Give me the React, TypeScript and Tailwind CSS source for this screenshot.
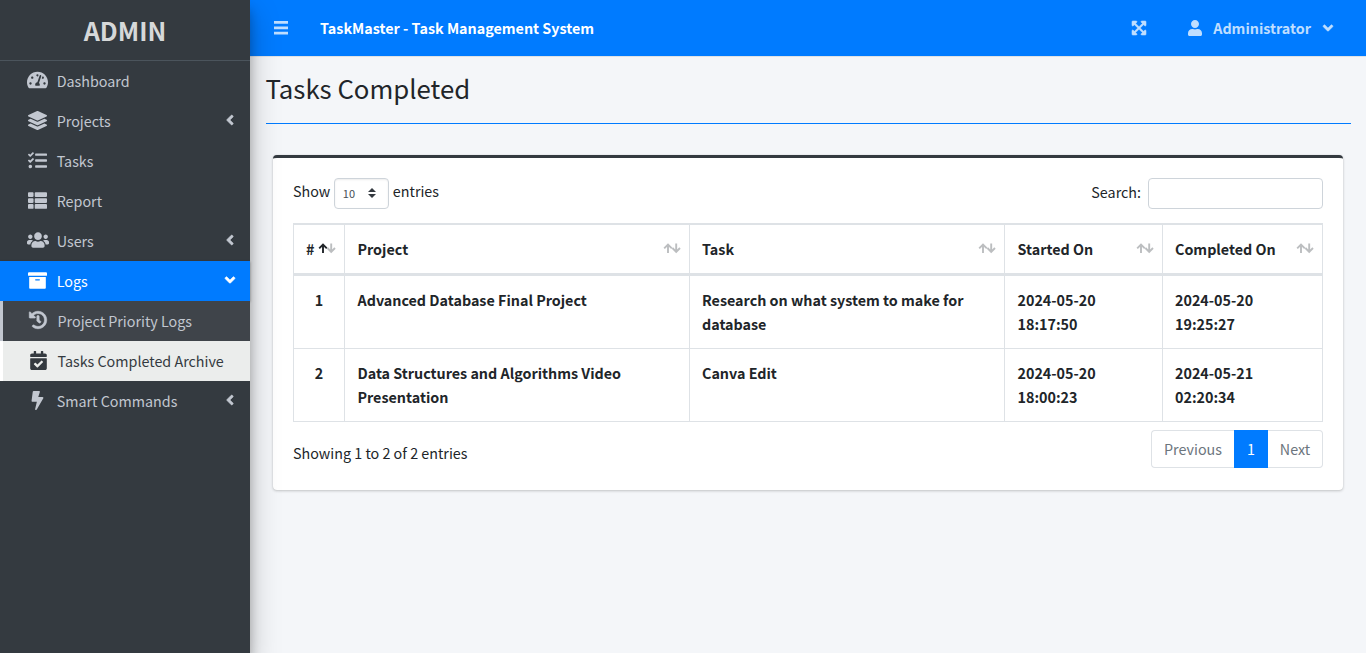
import React from "react";
import {
  FaTachometerAlt, FaLayerGroup, FaTasks, FaThList, FaUsers, FaArchive, FaHistory,
  FaCalendarCheck, FaBolt, FaAngleLeft, FaAngleDown, FaUser, FaExpandArrowsAlt,
} from "react-icons/fa";

type Icon = React.ComponentType<{ className?: string }>;

function NavItem({ icon: I, size, label, arrow, active }: { icon: Icon; size: string; label: string; arrow?: boolean; active?: boolean }) {
  return (
    <li
      className={
        "flex h-10 items-center pl-[24px] pr-[15px] " +
        (active ? "bg-[#007bff] text-white shadow-[0_1px_3px_rgba(0,0,0,0.12),0_1px_2px_rgba(0,0,0,0.24)]" : "text-[#c2c7d0]")
      }
    >
      <span className="flex w-[27px] justify-center pb-[2px]"><I className={size} /></span>
      <span className="ml-[5.7px] flex-1 pb-px leading-6">{label}</span>
      {arrow && (
        <span className="flex w-[10px] justify-center pb-[3px]">
          {active ? <FaAngleDown className="size-4 shrink-0 stroke-[18px]" /> : <FaAngleLeft className="size-4 shrink-0 stroke-[18px]" />}
        </span>
      )}
    </li>
  );
}

function SubItem({ icon: I, size, label, active }: { icon: Icon; size: string; label: string; active?: boolean }) {
  return (
    <li
      className={
        "flex h-10 items-center border-l-[3px] pl-[22px] " +
        (active ? "border-white bg-[#ebedec] text-[#343a40]" : "border-[#c2c7d0] bg-[#3f444a] text-[#c2c7d0]")
      }
    >
      <span className="flex w-[26px] justify-center pb-[2px]"><I className={size} /></span>
      <span className="ml-[6.5px] pb-px leading-6">{label}</span>
    </li>
  );
}

function MenuBars({ className }: { className?: string }) {
  return (
    <svg viewBox="0 0 14 14" className={className} fill="currentColor">
      <path d="M0 0h14v2.8H0zM0 5.4h14v2.8H0zM0 10.8h14v2.8H0z" />
    </svg>
  );
}

function SortArrows({ ascending }: { ascending?: boolean }) {
  return (
    <svg viewBox="0 0 18 12" className="mt-[6px] h-[12px] w-[18px] shrink-0" fill="none" strokeWidth="1.9">
      <path d="M5 10V1.8M1.2 5.4L5 1.6L8.8 5.4" stroke={ascending ? "#212529" : "#bcbec0"} />
      <path d="M13.2 0.4V8.6M9.4 5L13.2 8.8L17 5" stroke="#bcbec0" />
    </svg>
  );
}

const columns = ["#", "Project", "Task", "Started On", "Completed On"];
const rows = [
  ["1", "Advanced Database Final Project", "Research on what system to make for database", "2024-05-20 18:17:50", "2024-05-20 19:25:27"],
  ["2", "Data Structures and Algorithms Video Presentation", "Canva Edit", "2024-05-20 18:00:23", "2024-05-21 02:20:34"],
];

export default function App() {
  return (
    <div className="flex h-[653px] w-[1366px] overflow-hidden bg-[#f4f6f9] font-['Noto_Sans_CJK_SC','Noto_Sans_CJK_JP',sans-serif] text-[14.32px] leading-6 text-[#212529]">
      <aside className="relative z-10 w-[250px] shrink-0 bg-[#343a40] shadow-[0_14px_28px_rgba(0,0,0,0.25),0_10px_10px_rgba(0,0,0,0.22)]">
        <div className="flex h-[61px] items-center justify-center border-b border-[#4b545c] pb-px text-[25.1px] font-bold text-[#d6d8d9]">ADMIN</div>
        <ul>
          <NavItem icon={FaTachometerAlt} size="h-[20px] w-[21px] shrink-0" label="Dashboard" />
          <NavItem icon={FaLayerGroup} size="size-[19px] shrink-0" label="Projects" arrow />
          <NavItem icon={FaTasks} size="size-[19px] shrink-0" label="Tasks" />
          <NavItem icon={FaThList} size="size-[19px] shrink-0" label="Report" />
          <NavItem icon={FaUsers} size="size-[22px] shrink-0" label="Users" arrow />
          <NavItem icon={FaArchive} size="size-[19px] shrink-0" label="Logs" arrow active />
          <SubItem icon={FaHistory} size="size-[18px] shrink-0 overflow-visible stroke-[18px]" label="Project Priority Logs" />
          <SubItem icon={FaCalendarCheck} size="size-[19px] shrink-0" label="Tasks Completed Archive" active />
          <NavItem icon={FaBolt} size="size-[19px] shrink-0" label="Smart Commands" arrow />
        </ul>
      </aside>

      <div className="flex min-w-0 flex-1 flex-col">
        <header className="flex h-[57px] items-center border-b border-[#dee2e6] bg-[#007bff] pl-[24px] pr-[30px] font-bold">
          <MenuBars className="size-[14px] text-white/75" />
          <span className="ml-[32px] flex-1 pb-px text-white">TaskMaster - Task Management System</span>
          <FaExpandArrowsAlt className="size-4 text-[#bfdeff] stroke-[18px]" />
          <FaUser className="ml-[40px] size-4 text-[#bfdeff]" />
          <span className="ml-[10px] pb-px text-white/75">Administrator</span>
          <FaAngleDown className="ml-[9px] size-4 text-[#bfdeff] stroke-[14px]" />
        </header>

        <main className="flex flex-col pl-4 pr-[15px]">
          <h1 className="h-[67px] border-b border-[#007bff] pt-[13px] text-[25.75px] leading-[35px]">
            <span className="-ml-[0.5px]">Tasks Completed</span>
          </h1>

          <section className="ml-[7px] mr-2 mt-[31px] flex h-[335px] flex-col rounded-[4px] border-t-[3px] border-[#343a40] bg-white px-5 pt-5 shadow-[0_0_1px_rgba(0,0,0,0.125),0_1px_3px_rgba(0,0,0,0.2)]">
            <div className="flex h-[45px] items-start justify-between">
              <label className="flex items-start">
                <span className="pt-px">Show</span>
                <span className="ml-1 mr-[3.5px] flex h-[31px] w-[55px] items-center justify-between rounded-[4px] border border-[#ced4da] pl-[7.5px] pr-[12px] text-[11px] text-[#495057] shadow-[inset_0_1px_2px_rgba(0,0,0,0.075)]">
                  <span className="pb-px">10</span>
                  <svg viewBox="0 0 4 5" className="mb-px h-[10px] w-2"><path fill="#343a40" d="M2 0L0 2h4zm0 5L0 3h4z" /></svg>
                </span>
                <span className="pt-px">entries</span>
              </label>
              <label className="flex items-start">
                <span className="mr-[7px] pt-[2px]">Search:</span>
                <span className="h-[31px] w-[175px] rounded-[4px] border border-[#ced4da]" />
              </label>
            </div>

            <table className="w-[1030px] table-fixed border-separate border-spacing-0 border-r border-t-2 border-[#dee2e6] text-left font-bold">
              <colgroup>
                <col className="w-[51px]" />
                <col className="w-[345px]" />
                <col className="w-[315px]" />
                <col className="w-[158px]" />
                <col className="w-[160px]" />
              </colgroup>
              <thead>
                <tr>
                  {columns.map((c, i) => (
                    <th key={c} className="h-[51px] border-b-[3px] border-l border-[#dee2e6] p-0 pl-3 pr-2">
                      <div className="flex h-6 items-start justify-between">
                        <span className={i === 1 || i === 3 ? "pl-[0.5px]" : ""}>{c}</span>
                        <SortArrows ascending={i === 0} />
                      </div>
                    </th>
                  ))}
                </tr>
              </thead>
              <tbody>
                {rows.map((r) => (
                  <tr key={r[0]}>
                    {r.map((cell, i) => (
                      <td key={i} className={"h-[73px] border-b border-l border-[#dee2e6] py-3 align-top " + ["px-3 text-center", "pl-[12.5px] pr-[30px]", "pl-3 pr-[30px]", "pl-[12.5px] pr-[60px]", "pl-3 pr-[60px]"][i]}>
                        {cell}
                      </td>
                    ))}
                  </tr>
                ))}
              </tbody>
            </table>

            <div className="flex justify-between pt-2">
              <span className="pt-[11px]">Showing 1 to 2 of 2 entries</span>
              <nav className="flex h-[38px] text-[#6c757d]">
                <span className="flex w-[83px] items-center justify-center rounded-l-[4px] border border-r-0 border-[#dee2e6]">Previous</span>
                <span className="flex w-[34px] items-center justify-center bg-[#007bff] text-white">1</span>
                <span className="flex w-[55px] items-center justify-center rounded-r-[4px] border border-l-0 border-[#dee2e6]">Next</span>
              </nav>
            </div>
          </section>
        </main>
      </div>
    </div>
  );
}
